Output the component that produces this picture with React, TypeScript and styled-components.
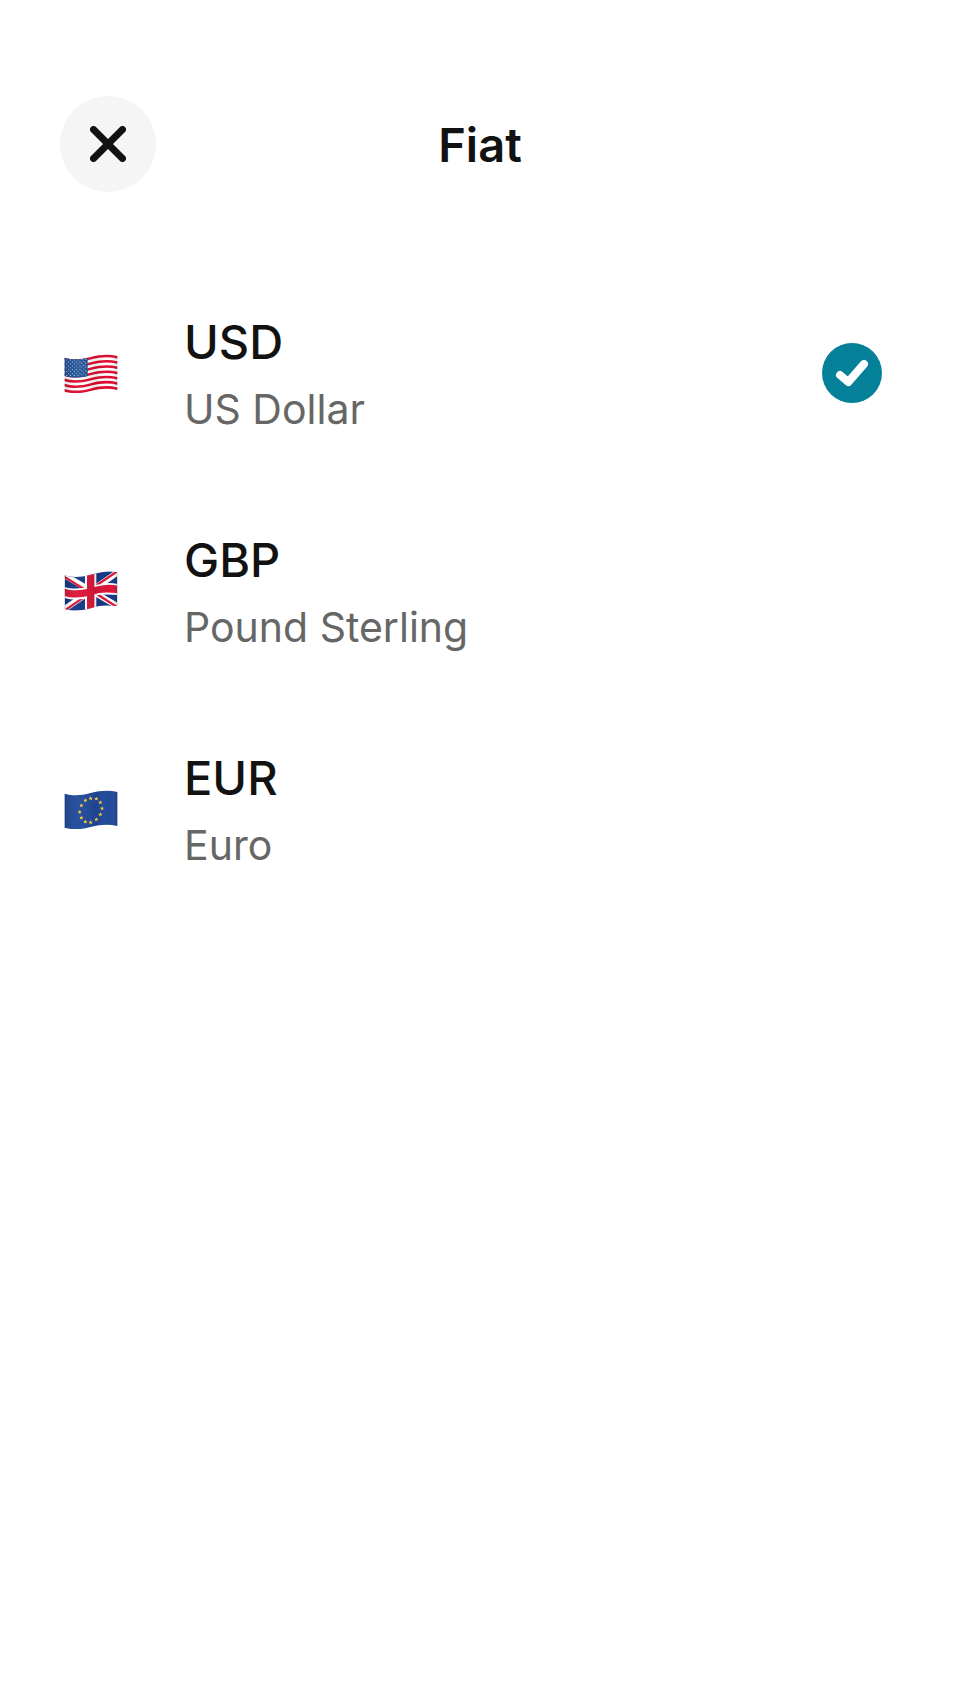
import React, { useState } from "react";
import styled, { createGlobalStyle } from "styled-components";

const GlobalStyle = createGlobalStyle`
  *, *::before, *::after { box-sizing: border-box; }
  body {
    margin: 0;
    background: #ffffff;
    color: #121212;
    font-family: Inter, "Liberation Sans", sans-serif;
  }
`;

const Screen = styled.main`
  min-height: 100vh;
  padding: 96px 60px;
  display: flex;
  flex-direction: column;
  gap: 72px;
`;

const Header = styled.header`
  display: grid;
  grid-template-columns: 96px 1fr 96px;
  align-items: center;
`;

const Title = styled.h1`
  margin: 0;
  padding-top: 2px;
  font-size: 47px;
  line-height: 72px;
  font-weight: 600;
  text-align: center;
`;

const CloseButton = styled.button`
  width: 96px;
  height: 96px;
  padding: 0;
  border: 0;
  border-radius: 50%;
  background: #f5f5f5;
  color: #121212;
  display: grid;
  place-items: center;
  cursor: pointer;
`;

const CurrencyList = styled.div`
  display: flex;
  flex-direction: column;
`;

const CurrencyRow = styled.label`
  display: grid;
  grid-template-columns: 62px 1fr 60px;
  column-gap: 62px;
  align-items: center;
  padding: 42px 18px 42px 0;
  cursor: pointer;
`;

const FlagSlot = styled.span`
  display: flex;
  justify-content: center;
`;

const CurrencyText = styled.span`
  display: flex;
  flex-direction: column;
`;

const Code = styled.span`
  font-size: 47px;
  line-height: 72px;
  font-weight: 500;
`;

const Name = styled.span`
  font-size: 41px;
  line-height: 62px;
  color: #666666;
`;

const RadioSlot = styled.span`
  display: grid;
  grid-template-areas: "mark";
`;

const Radio = styled.input`
  grid-area: mark;
  appearance: none;
  width: 60px;
  height: 60px;
  margin: 0;
  border-radius: 50%;
  cursor: pointer;

  &:checked { background: #048199; }
`;

const CheckMark = styled.svg`
  grid-area: mark;
  z-index: 1;
  pointer-events: none;
`;

/* Region between two parallel waving edges, used for whole flags and stripes. */
const band = (top: number, bottom: number, rise = 5) =>
  `M32 ${top} c25 7 48 6 78 -2 c30 -8 55 ${-rise - 4} 80 ${2 - rise} V${bottom - rise} ` +
  `c-25 ${rise - 11} -50 -5 -80 ${rise - 2} c-30 8 -53 9 -78 2 Z`;

const FlagSvg = ({ children }: { children: React.ReactNode }) => (
  <svg width="54" height="40" viewBox="30 27 162 120" aria-hidden="true">
    <defs>
      <linearGradient id="flag-shade" x1="0" x2="1" y1="0" y2="0">
        <stop offset="0" stopColor="#000" stopOpacity="0.12" />
        <stop offset="0.25" stopColor="#fff" stopOpacity="0.04" />
        <stop offset="0.6" stopColor="#000" stopOpacity="0.08" />
        <stop offset="0.85" stopColor="#fff" stopOpacity="0" />
        <stop offset="1" stopColor="#000" stopOpacity="0.14" />
      </linearGradient>
    </defs>
    {children}
  </svg>
);

const UsFlag = () => {
  const stripe = 102 / 13;
  const stars: React.ReactNode[] = [];
  for (let row = 0; row < 9; row++) {
    const count = row % 2 ? 5 : 6;
    for (let i = 0; i < count; i++) {
      const x = 38 + i * 11.4 + (row % 2 ? 5.7 : 0);
      stars.push(
        <circle key={`${row}-${i}`} cx={x} cy={48 + row * 5.8 + (x > 80 ? -2 : 0)} r="1.8" fill="#b4cbe6" />
      );
    }
  }
  return (
    <FlagSvg>
      <clipPath id="us-canton">
        <rect x="30" y="27" width="71" height="120" />
      </clipPath>
      <path d={band(41, 143)} fill="#ffffff" />
      {[0, 2, 4, 6, 8, 10, 12].map((n) => (
        <path key={n} d={band(41 + n * stripe, 41 + (n + 1) * stripe)} fill="#df0a2c" />
      ))}
      <g clipPath="url(#us-canton)">
        <path d={band(41, 96)} fill="#1f4f94" />
        {stars}
      </g>
      <path d={band(41, 143)} fill="url(#flag-shade)" />
    </FlagSvg>
  );
};

const UkFlag = () => (
  <FlagSvg>
    <clipPath id="uk-shape">
      <path d={band(40, 141, 9)} />
    </clipPath>
    <g clipPath="url(#uk-shape)">
      <rect x="30" y="20" width="162" height="130" fill="#123785" />
      <path d="M32 40 L190 132 M32 141 L190 32" stroke="#ffffff" strokeWidth="18" />
      <path d="M30 44 L108 92 M36 143 L112 90 M110 82 L190 28 M110 84 L190 136" stroke="#dc1437" strokeWidth="7" />
      <path d={band(75, 108, 9)} fill="#ffffff" />
      <rect x="93" y="20" width="34" height="130" fill="#ffffff" />
      <path d={band(80, 102, 9)} fill="#dc1437" />
      <rect x="99" y="20" width="22" height="130" fill="#dc1437" />
    </g>
    <path d={band(40, 141, 9)} fill="url(#flag-shade)" />
  </FlagSvg>
);

const EU_STARS = [
  [110, 55], [127, 56], [139, 67], [144, 85], [139, 103], [127, 118],
  [110, 127], [94, 125], [82, 113], [77, 96], [82, 76], [94, 61],
];

const EuFlag = () => (
  <FlagSvg>
    <path d={band(41, 143)} fill="#20499a" />
    <path d={band(41, 143)} fill="url(#flag-shade)" />
    {EU_STARS.map(([x, y]) => (
      <path
        key={`${x}-${y}`}
        transform={`translate(${x} ${y})`}
        d="M0 -6 L1.8 -2 L6 -2 L3 1 L4 5.4 L0 3 L-4 5.4 L-3 1 L-6 -2 L-1.8 -2 Z"
        fill="#fbcd3c"
      />
    ))}
  </FlagSvg>
);

const CURRENCIES = [
  { code: "USD", name: "US Dollar", Flag: UsFlag },
  { code: "GBP", name: "Pound Sterling", Flag: UkFlag },
  { code: "EUR", name: "Euro", Flag: EuFlag },
];

export default function App() {
  const [selected, setSelected] = useState("USD");
  return (
    <>
      <GlobalStyle />
      <Screen>
        <Header>
          <CloseButton type="button" aria-label="Close">
            <svg width="36" height="36" viewBox="0 0 36 36" fill="none" stroke="currentColor" strokeWidth="7" strokeLinecap="round" aria-hidden="true">
              <path d="M3.5 3.5 L32.5 32.5 M32.5 3.5 L3.5 32.5" />
            </svg>
          </CloseButton>
          <Title>Fiat</Title>
        </Header>
        <CurrencyList role="radiogroup" aria-label="Fiat">
          {CURRENCIES.map(({ code, name, Flag }) => (
            <CurrencyRow key={code}>
              <FlagSlot>
                <Flag />
              </FlagSlot>
              <CurrencyText>
                <Code>{code}</Code>
                <Name>{name}</Name>
              </CurrencyText>
              <RadioSlot>
                <Radio
                  type="radio"
                  name="currency"
                  value={code}
                  checked={selected === code}
                  onChange={() => setSelected(code)}
                />
                {selected === code && (
                  <CheckMark width="60" height="60" viewBox="0 0 60 60" fill="none" stroke="#ffffff" strokeWidth="8" strokeLinecap="round" strokeLinejoin="round" aria-hidden="true">
                    <path d="M18 32 L26.3 39 L42 21" />
                  </CheckMark>
                )}
              </RadioSlot>
            </CurrencyRow>
          ))}
        </CurrencyList>
      </Screen>
    </>
  );
}
